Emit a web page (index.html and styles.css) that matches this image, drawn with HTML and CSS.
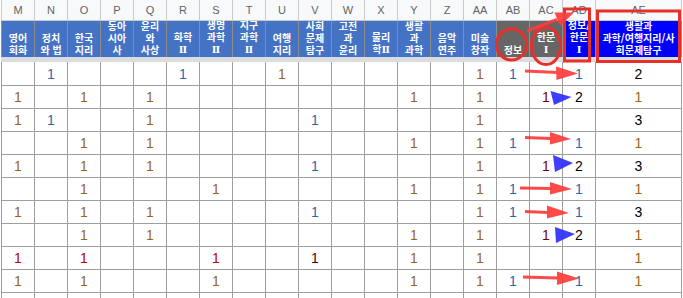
FILE: index.html
```html
<!DOCTYPE html>
<html lang="ko">
<head>
<meta charset="utf-8">
<title>Sheet</title>
<link rel="stylesheet" href="styles.css">
</head>
<body>
<div class="sheet">
  <div class="row letters">
    <div class="lc">M</div><div class="lc">N</div><div class="lc">O</div><div class="lc">P</div><div class="lc">Q</div><div class="lc">R</div><div class="lc">S</div><div class="lc">T</div><div class="lc">U</div><div class="lc">V</div><div class="lc">W</div><div class="lc">X</div><div class="lc">Y</div><div class="lc">Z</div><div class="lc">AA</div><div class="lc">AB</div><div class="lc">AC</div><div class="lc">AD</div><div class="lc">AE</div>
  </div>
  <div class="row heads">
    <div class="hc"><div class="ht">영어<br>회화</div></div>
    <div class="hc"><div class="ht">정치<br>와 법</div></div>
    <div class="hc"><div class="ht">한국<br>지리</div></div>
    <div class="hc"><div class="ht">동아<br>시아<br>사</div></div>
    <div class="hc"><div class="ht">윤리<br>와<br>사상</div></div>
    <div class="hc"><div class="ht">화학<br><span class="rn">Ⅱ</span></div></div>
    <div class="hc"><div class="ht">생명<br>과학<br><span class="rn">Ⅱ</span></div></div>
    <div class="hc"><div class="ht">지구<br>과학<br><span class="rn">Ⅱ</span></div></div>
    <div class="hc"><div class="ht">여행<br>지리</div></div>
    <div class="hc"><div class="ht">사회<br>문제<br>탐구</div></div>
    <div class="hc"><div class="ht">고전<br>과<br>윤리</div></div>
    <div class="hc"><div class="ht">물리<br>학<span class="rn">Ⅱ</span></div></div>
    <div class="hc"><div class="ht">생활<br>과<br>과학</div></div>
    <div class="hc"><div class="ht">음악<br>연주</div></div>
    <div class="hc"><div class="ht">미술<br>창작</div></div>
    <div class="hc gray"><div class="ht">정보</div></div>
    <div class="hc gray"><div class="ht">한문<br><span class="rn">Ⅰ</span></div></div>
    <div class="hc pure"><div class="ht">정보/<br>한문<br><span class="rn">Ⅰ</span></div></div>
    <div class="hc pure"><div class="ht">생활과<br>과학/여행지리/사<br>회문제탐구</div></div>
  </div>
  <div class="freeze"></div>
  <div class="data">
    <div class="row dr first">
      <div class="c"></div><div class="c b">1</div><div class="c"></div><div class="c"></div><div class="c"></div><div class="c b">1</div><div class="c"></div><div class="c"></div><div class="c o">1</div><div class="c"></div><div class="c"></div><div class="c"></div><div class="c"></div><div class="c"></div><div class="c o">1</div><div class="c b">1</div><div class="c"></div><div class="c b">1</div><div class="c k">2</div>
    </div>
    <div class="row dr">
      <div class="c o">1</div><div class="c"></div><div class="c o">1</div><div class="c"></div><div class="c o">1</div><div class="c"></div><div class="c"></div><div class="c"></div><div class="c"></div><div class="c"></div><div class="c"></div><div class="c"></div><div class="c o">1</div><div class="c"></div><div class="c o">1</div><div class="c"></div><div class="c m">1</div><div class="c k">2</div><div class="c o">1</div>
    </div>
    <div class="row dr">
      <div class="c o">1</div><div class="c b">1</div><div class="c"></div><div class="c"></div><div class="c o">1</div><div class="c"></div><div class="c"></div><div class="c"></div><div class="c"></div><div class="c b">1</div><div class="c"></div><div class="c"></div><div class="c"></div><div class="c"></div><div class="c o">1</div><div class="c"></div><div class="c"></div><div class="c"></div><div class="c k">3</div>
    </div>
    <div class="row dr">
      <div class="c"></div><div class="c"></div><div class="c o">1</div><div class="c"></div><div class="c o">1</div><div class="c"></div><div class="c"></div><div class="c"></div><div class="c"></div><div class="c"></div><div class="c"></div><div class="c"></div><div class="c o">1</div><div class="c"></div><div class="c o">1</div><div class="c b">1</div><div class="c"></div><div class="c b">1</div><div class="c o">1</div>
    </div>
    <div class="row dr">
      <div class="c o">1</div><div class="c"></div><div class="c o">1</div><div class="c"></div><div class="c o">1</div><div class="c"></div><div class="c"></div><div class="c"></div><div class="c"></div><div class="c b">1</div><div class="c"></div><div class="c"></div><div class="c"></div><div class="c"></div><div class="c o">1</div><div class="c"></div><div class="c m">1</div><div class="c k">2</div><div class="c k">3</div>
    </div>
    <div class="row dr">
      <div class="c"></div><div class="c"></div><div class="c o">1</div><div class="c"></div><div class="c"></div><div class="c"></div><div class="c o">1</div><div class="c"></div><div class="c"></div><div class="c"></div><div class="c"></div><div class="c"></div><div class="c o">1</div><div class="c"></div><div class="c o">1</div><div class="c b">1</div><div class="c"></div><div class="c b">1</div><div class="c o">1</div>
    </div>
    <div class="row dr">
      <div class="c o">1</div><div class="c"></div><div class="c o">1</div><div class="c"></div><div class="c o">1</div><div class="c"></div><div class="c"></div><div class="c"></div><div class="c"></div><div class="c b">1</div><div class="c"></div><div class="c"></div><div class="c"></div><div class="c"></div><div class="c o">1</div><div class="c b">1</div><div class="c"></div><div class="c b">1</div><div class="c k">3</div>
    </div>
    <div class="row dr">
      <div class="c"></div><div class="c"></div><div class="c o">1</div><div class="c"></div><div class="c o">1</div><div class="c"></div><div class="c"></div><div class="c"></div><div class="c"></div><div class="c"></div><div class="c"></div><div class="c"></div><div class="c o">1</div><div class="c"></div><div class="c o">1</div><div class="c"></div><div class="c m">1</div><div class="c k">2</div><div class="c o">1</div>
    </div>
    <div class="row dr">
      <div class="c r">1</div><div class="c"></div><div class="c r">1</div><div class="c"></div><div class="c"></div><div class="c"></div><div class="c r">1</div><div class="c"></div><div class="c"></div><div class="c dk">1</div><div class="c"></div><div class="c"></div><div class="c o">1</div><div class="c"></div><div class="c o">1</div><div class="c"></div><div class="c"></div><div class="c"></div><div class="c o">1</div>
    </div>
    <div class="row dr">
      <div class="c o">1</div><div class="c"></div><div class="c o">1</div><div class="c"></div><div class="c"></div><div class="c"></div><div class="c o">1</div><div class="c"></div><div class="c"></div><div class="c"></div><div class="c"></div><div class="c"></div><div class="c o">1</div><div class="c"></div><div class="c o">1</div><div class="c b">1</div><div class="c"></div><div class="c b">1</div><div class="c o">1</div>
    </div>
    <div class="row dr">
      <div class="c"></div><div class="c"></div><div class="c"></div><div class="c"></div><div class="c"></div><div class="c"></div><div class="c"></div><div class="c"></div><div class="c"></div><div class="c"></div><div class="c"></div><div class="c"></div><div class="c"></div><div class="c"></div><div class="c"></div><div class="c"></div><div class="c"></div><div class="c"></div><div class="c"></div>
    </div>
  </div>
</div>
<svg class="overlay" width="683" height="298" viewBox="0 0 683 298" aria-hidden="true">
  <g fill="none" stroke="#e8302a" stroke-width="3">
    <rect x="564.5" y="9" width="25" height="52"/>
    <rect x="597.5" y="11" width="82" height="50.5"/>
    <ellipse cx="511.5" cy="44.5" rx="15" ry="15.5"/>
    <ellipse cx="546" cy="46" rx="14.5" ry="18.5"/>
  </g>
  <g fill="#ff3b3b" stroke="#ff3b3b" stroke-width="3" opacity="0.92">
    <line x1="527" y1="31" x2="557" y2="19.5"/>
    <polygon points="554.5,12.5 560,26 574,12.5" stroke="none"/>
    <line x1="525" y1="71" x2="558" y2="72.5"/>
    <polygon points="556,66.5 556.5,80 578,73.5" stroke="none"/>
    <line x1="525" y1="137.5" x2="551" y2="138.5"/>
    <polygon points="550,132 550,144.5 571,139" stroke="none"/>
    <line x1="520" y1="188" x2="551" y2="188.5"/>
    <polygon points="550,182 550,194.5 572,189" stroke="none"/>
    <line x1="525" y1="211.5" x2="548" y2="212.5"/>
    <polygon points="547,205.5 547,218.5 569,213" stroke="none"/>
    <line x1="523" y1="277" x2="558" y2="278"/>
    <polygon points="557,271.5 557,285 579,278.5" stroke="none"/>
  </g>
  <g fill="#2e2eff" opacity="0.92">
    <polygon points="550.5,91 554,105 571.5,97"/>
    <polygon points="553,155 555,172 573,163"/>
    <polygon points="555,227 556,243 575,234"/>
  </g>
</svg>
</body>
</html>
```

FILE: styles.css
```css
html, body {
  margin: 0;
  padding: 0;
  background: #ffffff;
}
body {
  width: 683px;
  height: 298px;
  overflow: hidden;
  position: relative;
}
.sheet {
  margin-left: 1px;
  width: 681px;
}
.row {
  display: grid;
  grid-template-columns: repeat(18, 32px) 85px;
  column-gap: 1px;
  padding: 0 1px;
}
.letters {
  background: #c7c9cc;
  padding-bottom: 1px;
  grid-template-rows: 20px;
}
.lc {
  background: #f8f9fa;
  color: #5f6368;
  font-family: "Liberation Sans", Arial, sans-serif;
  font-size: 11px;
  display: flex;
  align-items: center;
  justify-content: center;
}
.heads {
  background: #8d8d8d;
  grid-template-rows: 36px;
}
.hc {
  background: #4472c4;
  color: #ffffff;
  font-family: "Noto Sans CJK KR", sans-serif;
  font-weight: 700;
  font-size: 10px;
  line-height: 12px;
  text-align: center;
  display: flex;
  flex-direction: column;
  justify-content: flex-end;
  padding-bottom: 1px;
  white-space: nowrap;
}
.ht {
  text-align: center;
}
.rn {
  font-family: "Liberation Serif", "DejaVu Serif", "Noto Sans CJK KR", serif;
  font-weight: 700;
  font-size: 10px;
}
.hc.gray {
  background: #666666;
}
.hc.pure {
  background: #0000ff;
}
.freeze {
  height: 5px;
  background: #dadce0;
}
.data {
  display: flex;
  flex-direction: column;
  gap: 1px;
  background: #9e9e9e;
}
.dr {
  background: #9e9e9e;
  grid-template-rows: 22px;
}
.dr.first {
  grid-template-rows: 23px;
}
.c {
  background: #ffffff;
  font-family: "Liberation Sans", Arial, sans-serif;
  font-size: 14px;
  display: flex;
  align-items: center;
  justify-content: center;
}
.o { color: #9a6614; }
.b { color: #1f6bb0; }
.k { color: #000000; }
.m { color: #7a0000; }
.r { color: #b80000; }
.dk { color: #5a0000; }
.overlay {
  position: absolute;
  left: 0;
  top: 0;
  pointer-events: none;
}
```
